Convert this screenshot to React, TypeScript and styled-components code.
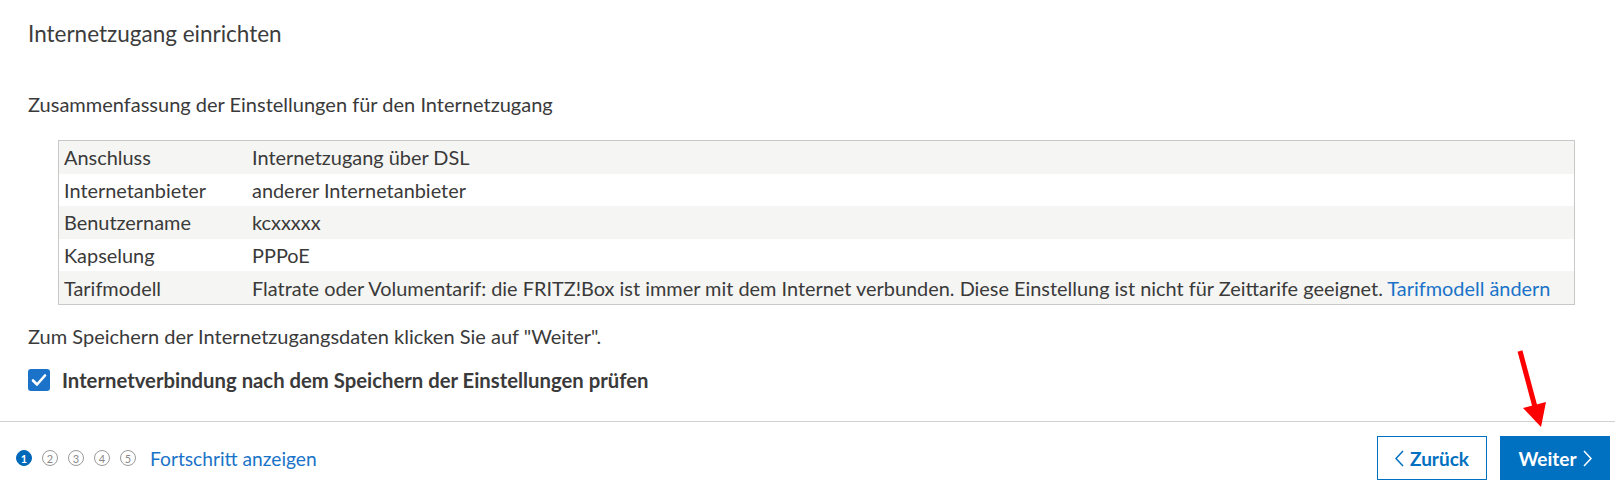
import * as React from "react";
import styled, { createGlobalStyle } from "styled-components";

const GlobalStyle = createGlobalStyle`
  body {
    margin: 0;
    background: #fff;
    font-family: Lato, "Open Sans", sans-serif;
    color: #3a3a3a;
  }
`;

const Page = styled.div`
  position: relative;
  width: 1615px;
  height: 494px;
  display: flex;
  flex-direction: column;
  overflow: hidden;
`;

const Content = styled.div`
  padding: 20px 12px 0 28px;
  flex: 1 1 auto;
`;

const Title = styled.h1`
  margin: 0;
  font-size: 22.5px;
  line-height: 28px;
  font-weight: 400;
  color: #3c3c3c;
`;

const Text = styled.p<{ mt: number }>`
  margin: ${p => p.mt}px 0 0 0;
  font-size: 20px;
  line-height: 24px;
`;

const Table = styled.div`
  margin: 24px 28px 0 30px;
  border: 1px solid #c8c8c8;
`;

const Row = styled.div<{ striped: boolean }>`
  display: grid;
  grid-template-columns: 188px 1fr;
  height: 32.6px;
  align-items: center;
  font-size: 19.9px;
  background: ${p => (p.striped ? "#f5f5f3" : "#fff")};
`;

const Cell = styled.div`
  padding-left: 5px;
  white-space: nowrap;
`;

const Link = styled.a`
  color: #1a73c8;
  text-decoration: none;
  cursor: pointer;
`;

const CheckRow = styled.label`
  display: flex;
  align-items: center;
  gap: 12px;
  margin-top: 20px;
  font-size: 20.3px;
  line-height: 24px;
  font-weight: 700;
`;

const CheckBox = styled.span`
  width: 22px;
  height: 22px;
  border-radius: 3px;
  background: #1a73c8;
  display: flex;
  align-items: center;
  justify-content: center;
`;

const Footer = styled.div`
  border-top: 1px solid #d0d0d0;
  display: flex;
  align-items: center;
  justify-content: space-between;
  padding: 14px 5px 14px 16px;
`;

const Steps = styled.div`
  display: flex;
  align-items: center;
  gap: 10px;
`;

const Step = styled.span<{ active: boolean }>`
  width: 16px;
  height: 16px;
  box-sizing: border-box;
  border-radius: 50%;
  border: 1px solid ${p => (p.active ? "#0068b8" : "#9a9a9a")};
  background: ${p => (p.active ? "#0068b8" : "#fff")};
  color: ${p => (p.active ? "#fff" : "#8a8a8a")};
  font-size: 11px;
  font-weight: ${p => (p.active ? 700 : 400)};
  display: flex;
  align-items: center;
  justify-content: center;
  line-height: 1;
`;

const ProgressLink = styled(Link)`
  margin-left: 4px;
  font-size: 19.2px;
`;

const Buttons = styled.div`
  display: flex;
  gap: 13px;
`;

const Button = styled.button<{ primary?: boolean }>`
  width: 110px;
  height: 44px;
  box-sizing: border-box;
  display: flex;
  align-items: center;
  justify-content: center;
  gap: 6px;
  font-family: inherit;
  font-size: 19px;
  font-weight: 700;
  border: 1px solid #0070c0;
  background: ${p => (p.primary ? "#0070c0" : "#fff")};
  color: ${p => (p.primary ? "#fff" : "#0070c0")};
  cursor: pointer;
`;

const Arrow = styled.svg`
  position: absolute;
  left: 1510px;
  top: 345px;
`;

const rows: Array<{ label: string; value: React.ReactNode }> = [
  { label: "Anschluss", value: "Internetzugang über DSL" },
  { label: "Internetanbieter", value: "anderer Internetanbieter" },
  { label: "Benutzername", value: "kcxxxxx" },
  { label: "Kapselung", value: "PPPoE" },
  {
    label: "Tarifmodell",
    value: (
      <>
        Flatrate oder Volumentarif: die FRITZ!Box ist immer mit dem Internet
        verbunden. Diese Einstellung ist nicht für Zeittarife geeignet.{" "}
        <Link>Tarifmodell ändern</Link>
      </>
    )
  }
];

const Chevron = ({ dir }: { dir: "left" | "right" }) => (
  <svg width="9" height="17" viewBox="0 0 9 17">
    <path
      d={dir === "left" ? "M8 1 L1 8.5 L8 16" : "M1 1 L8 8.5 L1 16"}
      fill="none"
      stroke="currentColor"
      strokeWidth="1.5"
    />
  </svg>
);

const App = () => (
  <Page>
    <GlobalStyle />
    <Content>
      <Title>Internetzugang einrichten</Title>
      <Text mt={44}>Zusammenfassung der Einstellungen für den Internetzugang</Text>
      <Table>
        {rows.map((r, i) => (
          <Row key={r.label} striped={i % 2 === 0}>
            <Cell>{r.label}</Cell>
            <Cell>{r.value}</Cell>
          </Row>
        ))}
      </Table>
      <Text mt={19}>
        Zum Speichern der Internetzugangsdaten klicken Sie auf "Weiter".
      </Text>
      <CheckRow>
        <CheckBox>
          <svg width="18" height="18" viewBox="0 0 18 18">
            <path
              d="M3 9.5 L7 13.5 L15 4.5"
              fill="none"
              stroke="#fff"
              strokeWidth="2.6"
              strokeLinecap="round"
              strokeLinejoin="round"
            />
          </svg>
        </CheckBox>
        Internetverbindung nach dem Speichern der Einstellungen prüfen
      </CheckRow>
    </Content>
    <Footer>
      <Steps>
        {[1, 2, 3, 4, 5].map(n => (
          <Step key={n} active={n === 1}>
            {n}
          </Step>
        ))}
        <ProgressLink>Fortschritt anzeigen</ProgressLink>
      </Steps>
      <Buttons>
        <Button>
          <Chevron dir="left" />
          Zurück
        </Button>
        <Button primary>
          Weiter
          <Chevron dir="right" />
        </Button>
      </Buttons>
    </Footer>
    <Arrow width="50" height="90" viewBox="0 0 50 90">
      <line x1="10" y1="6" x2="25" y2="62" stroke="#f00" strokeWidth="5" />
      <polygon points="13,63 36,57 31,82" fill="#f00" />
    </Arrow>
  </Page>
);

export default App;
